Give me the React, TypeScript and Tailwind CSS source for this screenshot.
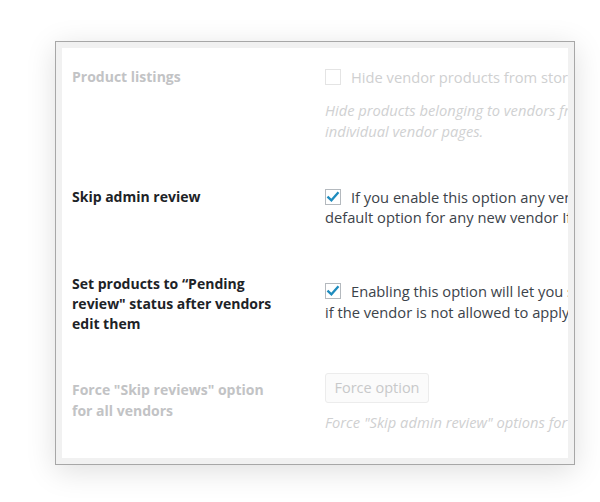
function Box({ checked, disabled }: { checked?: boolean; disabled?: boolean }) {
  return (
    <span
      className={`mt-[2px] flex h-4 w-4 shrink-0 items-center justify-center border bg-white ${
        disabled ? 'border-[#e4e4e4]' : 'border-[#b4b9be]'
      }`}
    >
      {checked && (
        <svg viewBox="0 0 16 16" className="h-[14px] w-[14px]">
          <path d="M2.6 8.4 L6.2 11.8 L13.4 3.6" fill="none" stroke="#1e8cbe" strokeWidth="2.6" strokeLinecap="square" />
        </svg>
      )}
    </span>
  )
}

export default function App() {
  return (
    <div className="min-h-screen bg-white pt-[41px] pl-[55px] font-['Open_Sans',sans-serif] text-[14px]">
      <div className="w-[520px] h-[424px] border border-[#a7a7a7] bg-[#f1f1f1] p-[6px] shadow-[0_6px_28px_rgba(0,0,0,0.13)]">
        <div className="h-full overflow-hidden bg-white pl-[10px] pt-[19px]">
          <div className="w-[700px]">
            {/* Product listings (disabled) */}
            <div className="flex items-start">
              <div className="w-[253px] shrink-0 text-[14px] font-bold leading-[20px] text-[#c2c3c5]">Product listings</div>
              <div className="whitespace-nowrap text-[14.7px]">
                <div className="flex items-start gap-[10px] leading-[20px] text-[#cfd0d1]">
                  <Box disabled />
                  <span>Hide vendor products from store</span>
                </div>
                <p className="mt-[13px] italic leading-[21px] text-[#d0d1d2]">
                  Hide products belonging to vendors from the shop page, so they are only visible on
                  <br />
                  individual vendor pages.
                </p>
              </div>
            </div>

            {/* Skip admin review */}
            <div className="mt-[45px] flex items-start">
              <div className="w-[253px] shrink-0 font-bold leading-[20px] text-[#1d2327]">Skip admin review</div>
              <div className="whitespace-nowrap text-[14.7px] leading-[20px] text-[#3c434a]">
                <div className="flex items-start gap-[10px]">
                  <Box checked />
                  <span>If you enable this option any vendor can publish products without admin approval. This is the</span>
                </div>
                <div>default option for any new vendor If you disable it, products need review.</div>
              </div>
            </div>

            {/* Pending review */}
            <div className="mt-[47px] flex items-start">
              <div className="w-[253px] shrink-0 whitespace-nowrap font-bold leading-[20px] text-[#1d2327]">
                Set products to “Pending
                <br />
                review" status after vendors
                <br />
                edit them
              </div>
              <div className="whitespace-nowrap pt-[7px] text-[14.7px] leading-[21px] text-[#3c434a]">
                <div className="flex items-start gap-[10px]">
                  <Box checked />
                  <span>Enabling this option will let you set products to pending review after edit</span>
                </div>
                <div>if the vendor is not allowed to apply changes without review.</div>
              </div>
            </div>

            {/* Force skip reviews (disabled) */}
            <div className="mt-[39px] flex items-start">
              <div className="w-[253px] shrink-0 whitespace-nowrap pt-[6px] font-bold leading-[21px] text-[#c2c3c5]">
                Force "Skip reviews" option
                <br />
                for all vendors
              </div>
              <div className="whitespace-nowrap">
                <button className="h-[30px] w-[104px] rounded-[3px] border border-[#ececec] bg-[#fbfbfb] text-[14.5px] text-[#c8c9ca]">
                  Force option
                </button>
                <p className="mt-[9px] text-[14.7px] italic leading-[21px] text-[#cfd0d1]">
                  Force "Skip admin review" options for all vendors
                </p>
              </div>
            </div>
          </div>
        </div>
      </div>
    </div>
  )
}
